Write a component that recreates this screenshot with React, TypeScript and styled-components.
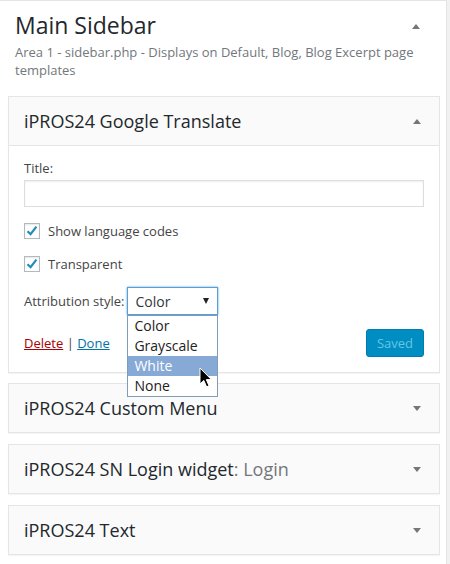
import styled, { createGlobalStyle } from "styled-components";

const font = `"Open Sans", "DejaVu Sans", sans-serif`;

const GlobalStyle = createGlobalStyle`
  html, body {
    margin: 0;
    padding: 0;
    background: #f1f1f1;
    font-family: ${font};
    color: #444;
  }
`;

const SidebarBox = styled.div`
  width: 447px;
  min-height: 564px;
  background: #fff;
  border-top: 1px solid #e5e5e5;
  border-right: 1px solid #e5e5e5;
  box-sizing: border-box;
`;

const SidebarHeader = styled.div`
  display: flex;
  justify-content: space-between;
  padding: 7px 26px 0 15px;
`;

const SidebarTitle = styled.h2`
  margin: 0;
  font-size: 23px;
  font-weight: 400;
  line-height: 34px;
  color: #23282d;
`;

const Description = styled.p`
  margin: 1px 0 0;
  padding: 0 15px;
  font-size: 13px;
  line-height: 18px;
  color: #72777c;
`;

const WidgetList = styled.div`
  display: flex;
  flex-direction: column;
  gap: 11px;
  padding: 17px 0 0 8px;
  width: 432px;
`;

const Widget = styled.div<{ $first?: boolean }>`
  border: 1px solid #e5e5e5;
  background: #fff;
  box-shadow: 0 1px 1px rgba(0, 0, 0, 0.04);
  margin-bottom: ${({ $first }) => ($first ? "-1px" : "0")};
`;

const WidgetTop = styled.div<{ $open?: boolean }>`
  display: flex;
  align-items: center;
  justify-content: space-between;
  height: 48px;
  padding: 0 18px 0 15px;
  background: #fafafa;
  border-bottom: ${({ $open }) => ($open ? "1px solid #e5e5e5" : "none")};
`;

const WidgetTitle = styled.h3`
  margin: 0;
  font-size: 18px;
  font-weight: 400;
  color: #23282d;
`;

const InWidgetTitle = styled.span`
  color: #72777c;
`;

const Arrow = styled.span<{ $up?: boolean }>`
  width: 0;
  height: 0;
  border-left: 4px solid transparent;
  border-right: 4px solid transparent;
  ${({ $up }) =>
    $up ? "border-bottom: 5px solid #72777c;" : "border-top: 5px solid #72777c;"}
`;

const WidgetInside = styled.div`
  display: flex;
  flex-direction: column;
  padding: 13px 15px 15px;
  font-size: 13px;
  color: #444;
`;

const Label = styled.label`
  display: block;
  font-size: 13px;
  line-height: 18px;
`;

const TextInput = styled.input`
  display: block;
  box-sizing: border-box;
  width: 400px;
  height: 27px;
  margin: 3px 0 16px;
  border: 1px solid #ddd;
  box-shadow: inset 0 1px 2px rgba(0, 0, 0, 0.07);
  font-family: ${font};
`;

const CheckRow = styled.div<{ $space: number }>`
  display: flex;
  align-items: center;
  gap: 8px;
  height: 16px;
  margin-bottom: ${({ $space }) => $space}px;
  font-size: 13px;
`;

const CheckBox = styled.span`
  box-sizing: border-box;
  width: 16px;
  height: 16px;
  border: 1px solid #b4b9be;
  box-shadow: inset 0 1px 2px rgba(0, 0, 0, 0.1);
  display: flex;
  align-items: center;
  justify-content: center;
`;

const SelectRow = styled.div`
  display: flex;
  align-items: center;
  gap: 3px;
  font-size: 13px;
`;

const SelectWrap = styled.div`
  position: relative;
`;

const SelectBox = styled.div`
  box-sizing: border-box;
  width: 91px;
  height: 28px;
  display: flex;
  align-items: center;
  justify-content: space-between;
  padding: 0 8px 0 7px;
  border: 1px solid #5b9dd9;
  box-shadow: 0 0 2px rgba(30, 140, 190, 0.8);
  font-size: 14px;
  color: #32373c;
`;

const SmallArrow = styled.span`
  width: 0;
  height: 0;
  border-left: 3px solid transparent;
  border-right: 3px solid transparent;
  border-top: 6px solid #222;
`;

const OptionList = styled.ul`
  position: absolute;
  top: 28px;
  left: 0;
  z-index: 5;
  box-sizing: border-box;
  width: 91px;
  margin: 0;
  padding: 0;
  list-style: none;
  background: #fff;
  border: 1px solid #7f9db9;
`;

const OptionItem = styled.li<{ $active?: boolean }>`
  height: 20px;
  line-height: 20px;
  padding: 0 6px;
  font-size: 14px;
  color: ${({ $active }) => ($active ? "#fff" : "#222")};
  background: ${({ $active }) => ($active ? "#87a9d6" : "transparent")};
`;

const Cursor = styled.svg`
  position: absolute;
  left: 72px;
  top: 80px;
  z-index: 6;
`;

const ControlRow = styled.div`
  display: flex;
  align-items: center;
  justify-content: space-between;
  margin-top: 14px;
`;

const Links = styled.div`
  font-size: 13px;
  color: #444;
`;

const Link = styled.a<{ $danger?: boolean }>`
  color: ${({ $danger }) => ($danger ? "#a00" : "#0073aa")};
  text-decoration: underline;
`;

const SavedButton = styled.button`
  box-sizing: border-box;
  width: 58px;
  height: 28px;
  border: 1px solid #007cb2;
  border-radius: 3px;
  background: #008ec2;
  color: #66c6e4;
  font-family: ${font};
  font-size: 13px;
`;

const Check = () => (
  <svg width="14" height="14" viewBox="0 0 14 14">
    <path d="M2.5 7.2 L5.6 10.2 L11.4 2.6" stroke="#1e8cbe" strokeWidth="2.2" fill="none" />
  </svg>
);

const collapsed = [
  { title: "iPROS24 Custom Menu" },
  { title: "iPROS24 SN Login widget", extra: "Login" },
  { title: "iPROS24 Text" },
];

export default function App() {
  return (
    <>
      <GlobalStyle />
      <SidebarBox>
        <SidebarHeader>
          <SidebarTitle>Main Sidebar</SidebarTitle>
          <Arrow $up style={{ marginTop: 16 }} />
        </SidebarHeader>
        <Description>
          Area 1 - sidebar.php - Displays on Default, Blog, Blog Excerpt page templates
        </Description>
        <WidgetList>
          <Widget $first>
            <WidgetTop $open>
              <WidgetTitle>iPROS24 Google Translate</WidgetTitle>
              <Arrow $up />
            </WidgetTop>
            <WidgetInside>
              <Label>Title:</Label>
              <TextInput type="text" />
              <CheckRow $space={17}>
                <CheckBox>
                  <Check />
                </CheckBox>
                Show language codes
              </CheckRow>
              <CheckRow $space={15}>
                <CheckBox>
                  <Check />
                </CheckBox>
                Transparent
              </CheckRow>
              <SelectRow>
                Attribution style:
                <SelectWrap>
                  <SelectBox>
                    Color
                    <SmallArrow />
                  </SelectBox>
                  <OptionList>
                    <OptionItem>Color</OptionItem>
                    <OptionItem>Grayscale</OptionItem>
                    <OptionItem $active>White</OptionItem>
                    <OptionItem>None</OptionItem>
                  </OptionList>
                  <Cursor width="14" height="22" viewBox="0 0 14 22">
                    <path
                      d="M1 1 L1 17 L4.8 13.4 L7.6 19.8 L10 18.8 L7.3 12.6 L12.4 12.6 Z"
                      fill="#000"
                      stroke="#fff"
                      strokeWidth="1"
                    />
                  </Cursor>
                </SelectWrap>
              </SelectRow>
              <ControlRow>
                <Links>
                  <Link $danger>Delete</Link> | <Link>Done</Link>
                </Links>
                <SavedButton disabled>Saved</SavedButton>
              </ControlRow>
            </WidgetInside>
          </Widget>
          {collapsed.map((w) => (
            <Widget key={w.title}>
              <WidgetTop>
                <WidgetTitle>
                  {w.title}
                  {w.extra && <InWidgetTitle>: {w.extra}</InWidgetTitle>}
                </WidgetTitle>
                <Arrow />
              </WidgetTop>
            </Widget>
          ))}
        </WidgetList>
      </SidebarBox>
    </>
  );
}
